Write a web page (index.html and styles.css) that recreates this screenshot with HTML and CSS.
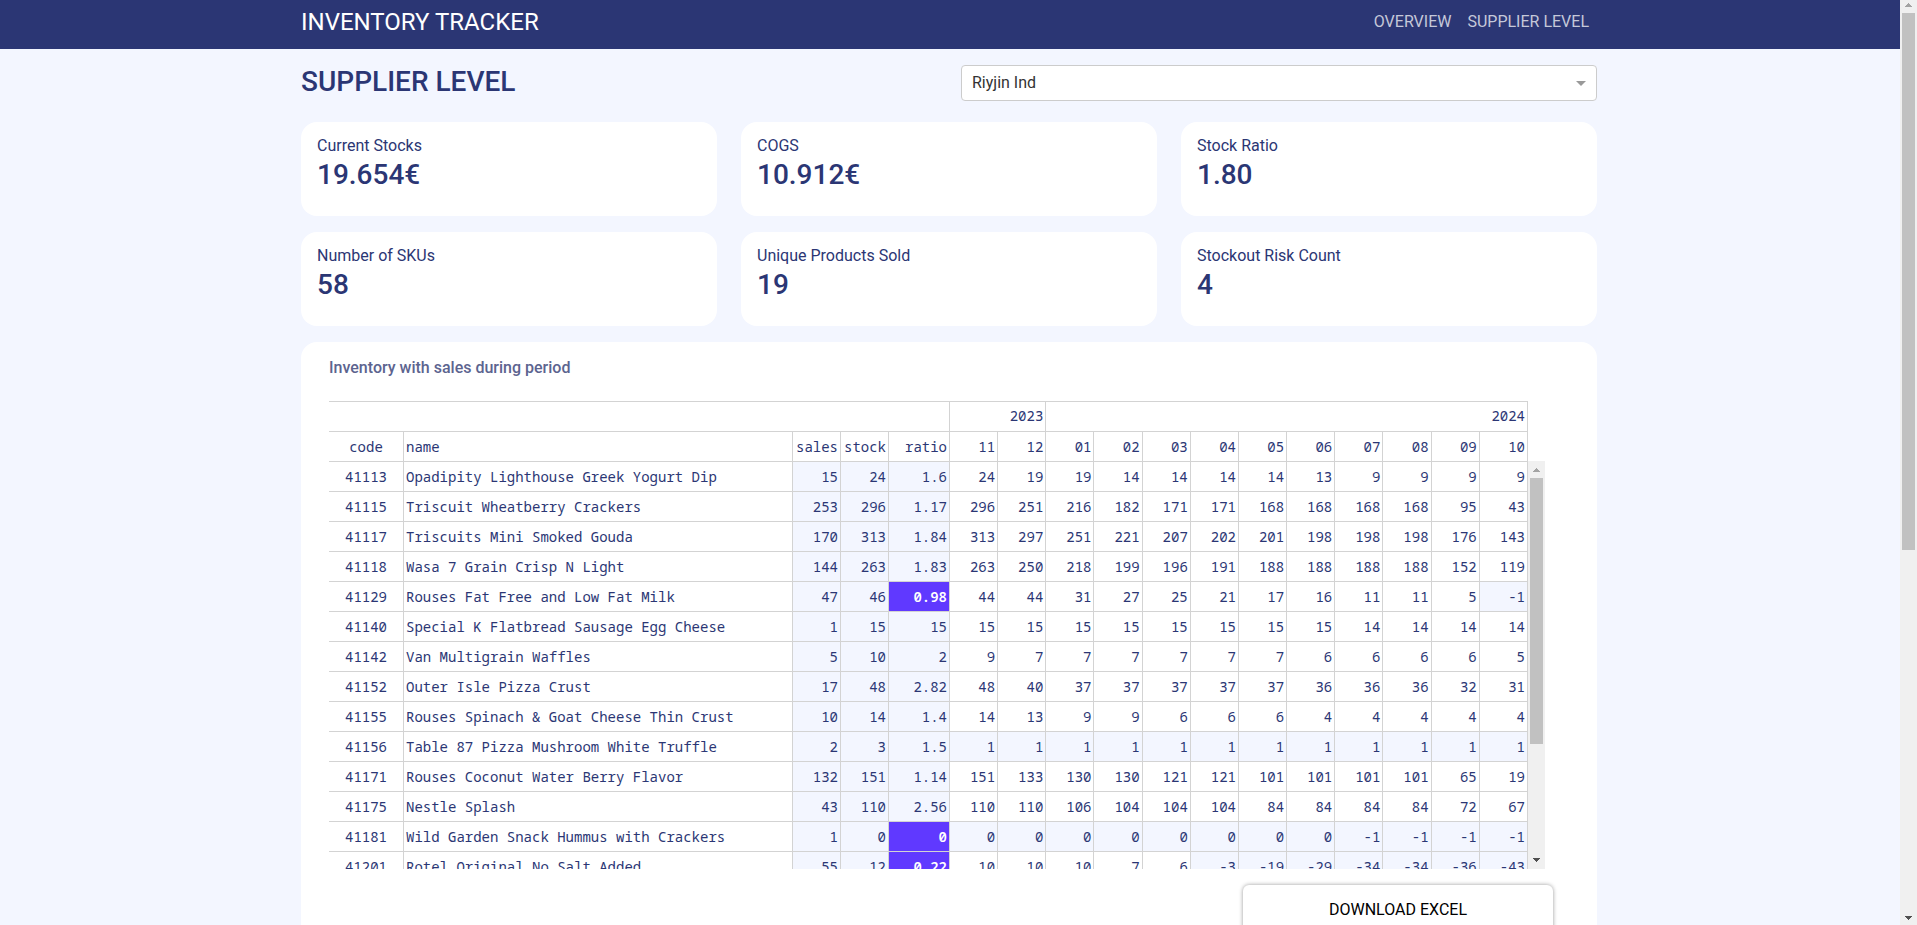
FILE: index.html
```html
<!DOCTYPE html>
<html lang="en">
<head>
<meta charset="utf-8">
<title>Inventory Tracker</title>
<link rel="stylesheet" href="styles.css">
</head>
<body>
<div class="page">
  <header class="navbar">
    <div class="container navbar-inner">
      <div class="brand">INVENTORY TRACKER</div>
      <nav class="nav">
        <a href="#overview">OVERVIEW</a>
        <a href="#supplier">SUPPLIER LEVEL</a>
      </nav>
    </div>
  </header>
  <main class="container">
    <div class="heading">
      <h1><label for="supplier">SUPPLIER LEVEL</label></h1>
      <div class="picker">
        <select id="supplier"><option>Riyjin Ind</option></select>
      </div>
    </div>
    <section class="cards">
      <div class="card"><div class="label">Current Stocks</div><div class="value">19.654€</div></div>
      <div class="card"><div class="label">COGS</div><div class="value">10.912€</div></div>
      <div class="card"><div class="label">Stock Ratio</div><div class="value">1.80</div></div>
      <div class="card"><div class="label">Number of SKUs</div><div class="value">58</div></div>
      <div class="card"><div class="label">Unique Products Sold</div><div class="value">19</div></div>
      <div class="card"><div class="label">Stockout Risk Count</div><div class="value">4</div></div>
    </section>
    <section class="panel">
      <h2>Inventory with sales during period</h2>
      <div class="table-wrap">
        <div class="table-area">
        <table>
          <colgroup><col class="c-code"><col class="c-name"><col class="c-num"><col class="c-num"><col class="c-ratio"><col><col><col><col><col><col><col><col><col><col><col><col></colgroup>
          <thead>
            <tr class="years"><th colspan="5"></th><th colspan="2">2023</th><th colspan="10">2024</th></tr>
            <tr><th>code</th><th>name</th><th>sales</th><th>stock</th><th>ratio</th><th>11</th><th>12</th><th>01</th><th>02</th><th>03</th><th>04</th><th>05</th><th>06</th><th>07</th><th>08</th><th>09</th><th>10</th></tr>
          </thead>
          <tbody>
            <tr><td>41113</td><td>Opadipity Lighthouse Greek Yogurt Dip</td><td>15</td><td>24</td><td>1.6</td><td>24</td><td>19</td><td>19</td><td>14</td><td>14</td><td>14</td><td>14</td><td>13</td><td>9</td><td>9</td><td>9</td><td>9</td></tr>
            <tr><td>41115</td><td>Triscuit Wheatberry Crackers</td><td>253</td><td>296</td><td>1.17</td><td>296</td><td>251</td><td>216</td><td>182</td><td>171</td><td>171</td><td>168</td><td>168</td><td>168</td><td>168</td><td>95</td><td>43</td></tr>
            <tr><td>41117</td><td>Triscuits Mini Smoked Gouda</td><td>170</td><td>313</td><td>1.84</td><td>313</td><td>297</td><td>251</td><td>221</td><td>207</td><td>202</td><td>201</td><td>198</td><td>198</td><td>198</td><td>176</td><td>143</td></tr>
            <tr><td>41118</td><td>Wasa 7 Grain Crisp N Light</td><td>144</td><td>263</td><td>1.83</td><td>263</td><td>250</td><td>218</td><td>199</td><td>196</td><td>191</td><td>188</td><td>188</td><td>188</td><td>188</td><td>152</td><td>119</td></tr>
            <tr><td>41129</td><td>Rouses Fat Free and Low Fat Milk</td><td>47</td><td>46</td><td class="risk">0.98</td><td>44</td><td>44</td><td>31</td><td>27</td><td>25</td><td>21</td><td>17</td><td>16</td><td>11</td><td>11</td><td>5</td><td class="low">-1</td></tr>
            <tr><td>41140</td><td>Special K Flatbread Sausage Egg Cheese</td><td>1</td><td>15</td><td>15</td><td>15</td><td>15</td><td>15</td><td>15</td><td>15</td><td>15</td><td>15</td><td>15</td><td>14</td><td>14</td><td>14</td><td>14</td></tr>
            <tr><td>41142</td><td>Van Multigrain Waffles</td><td>5</td><td>10</td><td>2</td><td>9</td><td>7</td><td>7</td><td>7</td><td>7</td><td>7</td><td>7</td><td>6</td><td>6</td><td>6</td><td>6</td><td>5</td></tr>
            <tr><td>41152</td><td>Outer Isle Pizza Crust</td><td>17</td><td>48</td><td>2.82</td><td>48</td><td>40</td><td>37</td><td>37</td><td>37</td><td>37</td><td>37</td><td>36</td><td>36</td><td>36</td><td>32</td><td>31</td></tr>
            <tr><td>41155</td><td>Rouses Spinach &amp; Goat Cheese Thin Crust</td><td>10</td><td>14</td><td>1.4</td><td>14</td><td>13</td><td>9</td><td>9</td><td>6</td><td>6</td><td>6</td><td>4</td><td>4</td><td>4</td><td>4</td><td>4</td></tr>
            <tr><td>41156</td><td>Table 87 Pizza Mushroom White Truffle</td><td>2</td><td>3</td><td>1.5</td><td class="low">1</td><td class="low">1</td><td class="low">1</td><td class="low">1</td><td class="low">1</td><td class="low">1</td><td class="low">1</td><td class="low">1</td><td class="low">1</td><td class="low">1</td><td class="low">1</td><td class="low">1</td></tr>
            <tr><td>41171</td><td>Rouses Coconut Water Berry Flavor</td><td>132</td><td>151</td><td>1.14</td><td>151</td><td>133</td><td>130</td><td>130</td><td>121</td><td>121</td><td>101</td><td>101</td><td>101</td><td>101</td><td>65</td><td>19</td></tr>
            <tr><td>41175</td><td>Nestle Splash</td><td>43</td><td>110</td><td>2.56</td><td>110</td><td>110</td><td>106</td><td>104</td><td>104</td><td>104</td><td>84</td><td>84</td><td>84</td><td>84</td><td>72</td><td>67</td></tr>
            <tr><td>41181</td><td>Wild Garden Snack Hummus with Crackers</td><td>1</td><td>0</td><td class="risk">0</td><td class="low">0</td><td class="low">0</td><td class="low">0</td><td class="low">0</td><td class="low">0</td><td class="low">0</td><td class="low">0</td><td class="low">0</td><td class="low">-1</td><td class="low">-1</td><td class="low">-1</td><td class="low">-1</td></tr>
            <tr><td>41201</td><td>Rotel Original No Salt Added</td><td>55</td><td>12</td><td class="risk">0.22</td><td>10</td><td>10</td><td>10</td><td>7</td><td>6</td><td class="low">-3</td><td class="low">-19</td><td class="low">-29</td><td class="low">-34</td><td class="low">-34</td><td class="low">-36</td><td class="low">-43</td></tr>
          </tbody>
        </table>
        </div>
        <div class="scrollbar table-scroll" aria-hidden="true">
          <svg viewBox="0 0 17 17"><path d="M5 11h7v-1h-1v-1h-1v-1h-1v-1h-1v1h-1v1h-1v1h-1z" fill="#a3a3a3"/></svg>
          <div class="track"><div class="thumb"></div></div>
          <svg viewBox="0 0 17 17"><path d="M5 6h7v1h-1v1h-1v1h-1v1h-1v-1h-1v-1h-1v-1h-1z" fill="#505050"/></svg>
        </div>
      </div>
      <div class="actions"><button type="button">DOWNLOAD EXCEL</button></div>
    </section>
  </main>
</div>
<div class="scrollbar page-scroll" aria-hidden="true">
  <svg viewBox="0 0 17 13"><path d="M5 7h7v-1h-1v-1h-1v-1h-1v-1h-1v1h-1v1h-1v1h-1z" fill="#a3a3a3"/></svg>
  <div class="track"><div class="thumb"></div></div>
  <svg viewBox="0 0 17 17"><path d="M5 8h7v1h-1v1h-1v1h-1v1h-1v-1h-1v-1h-1v-1h-1z" fill="#505050"/></svg>
</div>
</body>
</html>
```
FILE: styles.css
```css
* { box-sizing: border-box; }

body {
  margin: 0;
  height: 100vh;
  display: flex;
  overflow: hidden;
  background: #f3f6ff;
  color: #2b3674;
  font-family: Roboto, sans-serif;
  font-size: 16px;
  line-height: 24px;
}

.page { flex: 1; min-width: 0; overflow: hidden; }

.container {
  width: 100%;
  max-width: 1320px;
  margin: 0 auto;
  padding: 0 13px 0 11px;
}

.navbar { background: #2b3674; height: 49px; }

.navbar-inner {
  display: flex;
  justify-content: space-between;
  align-items: center;
  height: 44px;
}

.brand { color: #fff; font-size: 24px; }

.nav { display: flex; gap: 16px; padding-right: 8px; }

.nav a { color: #c5c8d9; text-decoration: none; }

.heading {
  display: grid;
  grid-template-columns: 1fr 636px;
  align-items: start;
  gap: 24px;
  padding: 16px 0 21px;
}

h1 {
  margin: 0;
  font-size: 28px;
  font-weight: 500;
  line-height: 34px;
}

.picker { position: relative; }

.picker::after {
  content: "";
  position: absolute;
  right: 11px;
  top: 16px;
  border: 5px solid transparent;
  border-top-color: #999;
  border-bottom: 0;
  pointer-events: none;
}

select {
  appearance: none;
  display: block;
  width: 100%;
  height: 36px;
  padding: 0 10px;
  border: 1px solid #ccc;
  border-radius: 4px;
  background: #fff;
  color: #333;
  font: inherit;
}

.cards {
  display: grid;
  grid-template-columns: repeat(3, 1fr);
  gap: 16px 24px;
}

.card {
  background: #fff;
  border-radius: 16px;
  padding: 12px 16px 14px;
  height: 94px;
}

.value { font-size: 28px; font-weight: 500; line-height: 34px; }

.panel {
  margin-top: 16px;
  padding: 14px 28px 32px;
  background: #fff;
  border-radius: 16px;
}

h2 {
  margin: 0 0 21px;
  color: #5c648f;
  font-size: 16px;
  font-weight: 500;
}

.table-wrap {
  display: flex;
  height: 468px;
  margin-right: 24px;
  overflow: hidden;
}

.table-area { flex: 1; min-width: 0; overflow: hidden; }

table {
  width: 100%;
  table-layout: fixed;
  border-collapse: separate;
  border-spacing: 0;
  font-family: "Noto Sans Mono", "DejaVu Sans Mono", monospace;
  font-size: 14px;
  line-height: 20px;
}

.c-code { width: 75px; }
.c-name { width: 389px; }
.c-num { width: 48px; }
.c-ratio { width: 61px; }

th, td {
  height: 30px;
  padding: 0 2px;
  border-right: 1px solid #d3d3d3;
  border-bottom: 1px solid #d3d3d3;
  font-weight: 400;
  text-align: right;
  white-space: nowrap;
}

.years th { height: 31px; padding-bottom: 2px; border-top: 1px solid #d3d3d3; }

tr:not(.years) > :nth-child(1) { text-align: center; }
tr:not(.years) > :nth-child(2) { text-align: left; }

td:nth-child(3), td:nth-child(4), td:nth-child(5), .low { background: #f3f6ff; }

td.risk { background: #6039ff; color: #fff; font-weight: 600; }

.scrollbar {
  display: flex;
  flex-direction: column;
  flex: none;
  width: 17px;
  background: #f0f0f0;
}

.scrollbar svg { display: block; width: 17px; height: 17px; flex: none; }

.track { flex: 1; padding: 0 2px; }

.thumb { background: #c1c1c1; }

.table-scroll { margin-top: 60px; }
.table-scroll .thumb { height: 71%; }
.page-scroll svg:first-child { height: 13px; }
.page-scroll .thumb { height: 60%; }

.actions { padding-top: 16px; }

button {
  display: block;
  width: 25%;
  height: 50px;
  margin: 0 16px 0 auto;
  border: 0;
  border-radius: 6px;
  background: #fff;
  color: #000;
  font: inherit;
  box-shadow: 0 0 4px rgba(0, 0, 0, 0.4);
}
```
